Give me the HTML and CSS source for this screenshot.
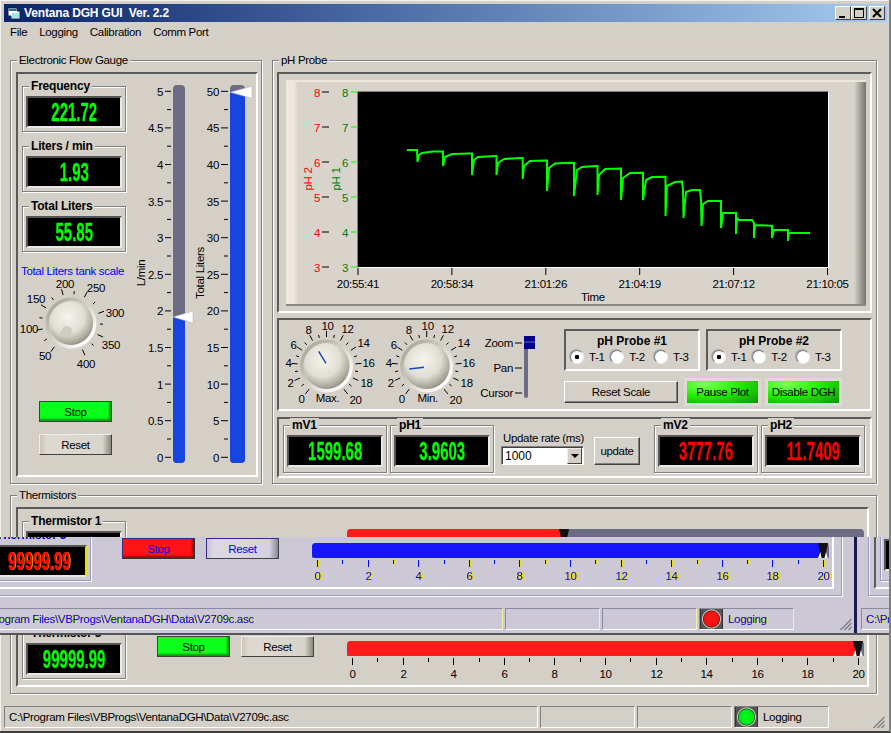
FILE: index.html
```html
<!DOCTYPE html>
<html lang="en">
<head>
    <meta charset="UTF-8">
    <title>Ventana DGH GUI Ver. 2.2</title>
    <link rel="stylesheet" href="styles.css">
</head>
<body>
<div class="window">
    <div class="titlebar">
        <svg class="app-icon" width="16" height="16" viewBox="0 0 16 16">
            <path d="M2 3h9v3h3v8H5v-3H2z" fill="#fff" stroke="#123" stroke-width="1"/>
            <rect x="3" y="4" width="7" height="2" fill="#2a6a9a"/>
            <rect x="6" y="8" width="7" height="5" fill="#9fe6f0"/>
        </svg>
        <span class="title-text">Ventana DGH GUI  Ver. 2.2</span>
        <div class="win-buttons">
            <button class="win-btn"><svg width="10" height="10"><rect x="1" y="8" width="6" height="2" fill="#000"/></svg></button>
            <button class="win-btn"><svg width="10" height="10"><rect x="0.5" y="0.5" width="9" height="9" fill="none" stroke="#000"/><rect x="0" y="0" width="10" height="2" fill="#000"/></svg></button>
            <button class="win-btn close"><svg width="10" height="10"><path d="M1 1l8 8M9 1l-8 8" stroke="#000" stroke-width="2"/></svg></button>
        </div>
    </div>
    <div class="menubar">
        <span>File</span>
        <span>Logging</span>
        <span>Calibration</span>
        <span>Comm Port</span>
    </div>

    <div class="client">
        <div class="top-row">
            <div class="group flow-group">
                <span class="group-title">Electronic Flow Gauge</span>
                <div class="sunken flow-panel">
                    <div class="flow-left">
                        <div class="readout">
                            <strong class="group-title">Frequency</strong>
                            <div class="lcd"><span>221.72</span></div>
                        </div>
                        <div class="readout">
                            <strong class="group-title">Liters / min</strong>
                            <div class="lcd"><span>1.93</span></div>
                        </div>
                        <div class="readout">
                            <strong class="group-title">Total Liters</strong>
                            <div class="lcd"><span>55.85</span></div>
                        </div>
                        <div class="tank-label">Total Liters tank scale</div>
                        <svg id="tank-knob" width="104" height="98" viewBox="22 278 104 98"></svg>
                        <button class="btn btn-stop flow-stop">Stop</button>
                        <button class="btn btn-reset flow-reset">Reset</button>
                    </div>
                    <svg id="gauges" width="128" height="401" viewBox="128 74 128 401"></svg>
                </div>
            </div>

            <div class="group ph-group">
                <span class="group-title">pH Probe</span>
                <div class="sunken plot-panel">
                    <div class="plot-frame">
                        <svg id="plot" width="580" height="222" viewBox="286 82 580 222"></svg>
                    </div>
                </div>
                <div class="sunken control-panel">
                    <svg id="knobs" width="201" height="89" viewBox="279 320 201 89"></svg>
                    <svg id="mode-slider" width="60" height="89" viewBox="480 320 60 89"></svg>
                    <div class="probe-col">
                        <div class="probe-row">
                            <div class="probe-box">
                                <strong>pH Probe #1</strong>
                                <div class="radios">
                                    <label class="radio on">T-1</label>
                                    <label class="radio">T-2</label>
                                    <label class="radio">T-3</label>
                                </div>
                            </div>
                            <div class="probe-box">
                                <strong>pH Probe #2</strong>
                                <div class="radios">
                                    <label class="radio on">T-1</label>
                                    <label class="radio">T-2</label>
                                    <label class="radio">T-3</label>
                                </div>
                            </div>
                        </div>
                        <div class="action-row">
                            <button class="btn btn-flat reset-scale">Reset Scale</button>
                            <button class="btn-glow">Pause Plot</button>
                            <button class="btn-glow">Disable DGH</button>
                        </div>
                    </div>
                </div>
                <div class="sunken values-panel">
                    <div class="readout tall">
                        <strong class="group-title">mV1</strong>
                        <div class="lcd"><span>1599.68</span></div>
                    </div>
                    <div class="readout tall">
                        <strong class="group-title">pH1</strong>
                        <div class="lcd"><span>3.9603</span></div>
                    </div>
                    <div class="rate-col">
                        <span>Update rate (ms)</span>
                        <div class="combo">
                            <span class="combo-value">1000</span>
                            <span class="combo-arrow"></span>
                        </div>
                    </div>
                    <button class="btn btn-flat update-btn">update</button>
                    <div class="readout tall mv2">
                        <strong class="group-title">mV2</strong>
                        <div class="lcd red"><span>3777.76</span></div>
                    </div>
                    <div class="readout tall">
                        <strong class="group-title">pH2</strong>
                        <div class="lcd red"><span>11.7409</span></div>
                    </div>
                </div>
            </div>
        </div>

        <div class="group thermistors">
            <span class="group-title">Thermistors</span>
            <div class="sunken thermistor-panel">
                <div class="thermistor-row">
                    <div class="readout">
                        <strong class="group-title">Thermistor 1</strong>
                        <div class="lcd"><span>99999.99</span></div>
                    </div>
                    <button class="btn btn-stop not-painted">Stop</button>
                    <button class="btn btn-reset not-painted">Reset</button>
                    <svg class="bar-scale" data-value="8.38" data-fill="#ff1a1a" width="520" height="46" viewBox="0 0 520 46"></svg>
                </div>
                <div class="thermistor-row">
                    <div class="readout">
                        <strong class="group-title">Thermistor 2</strong>
                        <div class="lcd"><span>99999.99</span></div>
                    </div>
                    <button class="btn btn-stop">Stop</button>
                    <button class="btn btn-reset">Reset</button>
                    <svg class="bar-scale" data-value="20" data-fill="#ff1a1a" width="520" height="46" viewBox="0 0 520 46"></svg>
                </div>
                <div class="thermistor-row">
                    <div class="readout">
                        <strong class="group-title">Thermistor 3</strong>
                        <div class="lcd"><span>99999.99</span></div>
                    </div>
                    <button class="btn btn-stop">Stop</button>
                    <button class="btn btn-reset">Reset</button>
                    <svg class="bar-scale" data-value="20" data-fill="#ff1a1a" width="520" height="46" viewBox="0 0 520 46"></svg>
                </div>
            </div>
        </div>
    </div>

    <div class="statusbar">
        <div class="status-cell path-cell">C:\Program Files\VBProgs\VentanaDGH\Data\V2709c.asc</div>
        <div class="status-cell mid-cell"></div>
        <div class="status-cell mid-cell"></div>
        <div class="status-cell log-cell"><span class="led green"></span>Logging</div>
        <svg class="grip" width="12" height="12" viewBox="0 0 12 12"><path d="M11.5 1l-11 11M11.5 5l-7 7M11.5 9l-3 3" stroke="#808080" stroke-width="1.4"/></svg>
    </div>

    <!-- stale copy of the window left on screen by the last redraw -->
    <div class="ghost">
        <div class="ghost-main">
            <div class="ghost-shift">
                <div class="group thermistors">
                    <div class="sunken thermistor-panel">
                        <div class="thermistor-row">
                            <div class="readout">
                                <strong class="group-title">Thermistor 3</strong>
                                <div class="lcd red"><span>99999.99</span></div>
                            </div>
                            <button class="btn btn-alarm">Stop</button>
                            <button class="btn btn-reset">Reset</button>
                            <svg class="bar-scale" data-value="20" data-fill="#1414ff" width="520" height="46" viewBox="0 0 520 46"></svg>
                        </div>
                    </div>
                </div>
                <div class="statusbar">
                    <div class="status-cell path-cell">C:\Program Files\VBProgs\VentanaDGH\Data\V2709c.asc</div>
                    <div class="status-cell mid-cell"></div>
                    <div class="status-cell mid-cell"></div>
                    <div class="status-cell log-cell"><span class="led red"></span>Logging</div>
                    <svg class="grip" width="12" height="12" viewBox="0 0 12 12"><path d="M11.5 1l-11 11M11.5 5l-7 7M11.5 9l-3 3" stroke="#808080" stroke-width="1.4"/></svg>
                </div>
            </div>
        </div>
        <div class="ghost-wrap">
            <div class="group thermistors">
                <div class="sunken thermistor-panel">
                    <div class="thermistor-row">
                        <div class="readout">
                            <div class="lcd"></div>
                        </div>
                    </div>
                </div>
            </div>
            <div class="statusbar">
                <div class="status-cell path-cell">C:\Program Files\VBProgs\VentanaDGH\Data\V2709c.asc</div>
            </div>
        </div>
    </div>
</div>
<script src="script.js"></script>
</body>
</html>
```

FILE: styles.css
```css
* {
    box-sizing: border-box;
}

body {
    margin: 0;
    overflow: hidden;
    font-family: "Liberation Sans", Arial, sans-serif;
    font-size: 11.5px;
    letter-spacing: -0.33px;
    color: #000;
    background-color: #d4d0c8;
}

button {
    font-family: inherit;
    font-size: inherit;
    letter-spacing: inherit;
    color: inherit;
    padding: 0;
}

svg {
    display: block;
    flex: none;
    overflow: visible;
}

svg text {
    font-family: "Liberation Sans", Arial, sans-serif;
    font-size: 11.5px;
    letter-spacing: -0.3px;
}

.window {
    position: relative;
    width: 891px;
    height: 733px;
    padding: 4px 4px 0 4px;
    background-color: #d4d0c8;
    border-right: 2px solid #808080;
    border-bottom: 2px solid #404040;
    box-shadow: inset 1px 1px 0 #f4f2ec;
    overflow: hidden;
}

.titlebar {
    display: flex;
    align-items: center;
    height: 18px;
    margin-right: -2px;
    padding: 0 2px;
    color: #fff;
    background: linear-gradient(90deg, #0a246a, #a6caf0);
}

.app-icon {
    margin-right: 2px;
}

.title-text {
    font-size: 12px;
    font-weight: bold;
    letter-spacing: -0.15px;
    white-space: pre;
}

.win-buttons {
    display: flex;
    margin-left: auto;
}

.win-btn {
    display: flex;
    align-items: center;
    justify-content: center;
    width: 16px;
    height: 14px;
    background-color: #d4d0c8;
    border: 1px solid;
    border-color: #fff #404040 #404040 #fff;
}

.win-btn.close {
    margin-left: 2px;
}

.menubar {
    display: flex;
    gap: 12px;
    align-items: center;
    height: 20px;
    padding-left: 6px;
}

.client {
    padding: 18px 6px 0;
}

.top-row {
    display: flex;
    gap: 10px;
    height: 424px;
}

/* etched frame with its caption sitting on the top line */
.group {
    border: 1px solid #808080;
    box-shadow: 1px 1px 0 #fff, inset 1px 1px 0 #fff;
}

.group-title {
    display: table;
    height: 14px;
    margin: -8px 0 0 6px;
    padding: 0 2px;
    line-height: 14px;
    background-color: #d4d0c8;
}

.sunken {
    border: 2px solid;
    border-color: #5a5a5a #fff #fff #5a5a5a;
}

.flow-group {
    width: 252px;
}

.ph-group {
    width: 605px;
}

.flow-panel {
    display: flex;
    width: 242px;
    height: 405px;
    margin: 5px 0 0 5px;
}

.flow-left {
    display: flex;
    flex-direction: column;
    width: 104px;
    margin: 12px 2px 0 4px;
}

.readout {
    flex: none;
    width: 104px;
    height: 46px;
    margin-bottom: 14px;
    border: 1px solid #808080;
    box-shadow: 1px 1px 0 #fff, inset 1px 1px 0 #fff;
}

.readout .group-title {
    font-size: 12px;
    letter-spacing: -0.2px;
}

.readout.tall {
    height: 48px;
    margin-bottom: 0;
}

.lcd {
    display: flex;
    align-items: center;
    justify-content: center;
    width: 96px;
    height: 32px;
    margin: 3px 0 0 3px;
    overflow: hidden;
    color: #00ff00;
    background-color: #000;
    border: 2px solid;
    border-color: #555 #e8e8e8 #e8e8e8 #555;
}

.lcd span {
    display: inline-block;
    font-size: 25px;
    font-weight: bold;
    letter-spacing: 0;
    line-height: 1;
    transform: scaleX(0.6);
    -webkit-text-stroke: 0.3px currentColor;
}

.lcd.red {
    color: #ff0000;
}

.tank-label {
    margin: -2px 0 0 -1px;
    height: 14px;
    line-height: 14px;
    color: #0000ff;
    white-space: nowrap;
}

.btn {
    flex: none;
    width: 73px;
    height: 21px;
    background-color: #d4d0c8;
    border: 1px solid #404040;
}

.btn-stop {
    background-color: #0bff1a;
    box-shadow: inset -3px -3px 2px -1px #0a9a10;
}

.btn-reset {
    border-color: #eee #404040 #404040 #eee;
    background: linear-gradient(90deg, #c8c4ba, #dedad2 10%, #d8d4cc 88%, #8a887e);
}

.btn-alarm {
    background-color: #ff1414;
    border-color: #3a2a8a #333 #333 #3a2a8a;
    box-shadow: inset -3px -3px 2px -1px #9a0a0a;
}

.btn-flat {
    border-color: #fff #404040 #404040 #fff;
    box-shadow: inset -1px -1px 0 #808080;
}

.flow-stop {
    margin-top: 25px;
    margin-left: 17px;
}

.flow-reset {
    margin-top: 12px;
    margin-left: 17px;
}

.plot-panel {
    width: 595px;
    height: 241px;
    margin: 5px 0 0 4px;
    padding: 6px 0 5px 7px;
}

.plot-frame {
    width: 580px;
    height: 226px;
    border-top: 2px solid #ebe7dd;
    border-bottom: 2px solid #8c8a80;
    background: linear-gradient(90deg, #eee9df 0, #eee9df 8px, #d8d4cc 12px, #d8d4cc calc(100% - 12px), #75736c 100%);
}

.control-panel {
    display: flex;
    width: 595px;
    height: 93px;
    margin: 5px 0 0 4px;
}

.probe-col {
    margin: 9px 0 0 24px;
}

.probe-row {
    display: flex;
    gap: 6px;
}

.probe-box {
    width: 136px;
    height: 42px;
    padding-top: 3px;
    text-align: center;
    border: 2px solid;
    border-color: #5a5a5a #fff #fff #5a5a5a;
}

.probe-box strong {
    font-size: 12px;
    letter-spacing: 0;
}

.radios {
    display: flex;
    margin: 2px 0 0 4px;
    text-align: left;
}

.radio {
    display: flex;
    align-items: center;
    gap: 5px;
    width: 46px;
}

.radio:first-child {
    width: 42px;
}

.radio::before {
    content: "";
    width: 12px;
    height: 12px;
    border-radius: 50%;
    background-color: #fff;
    border: 1px solid;
    border-color: #808080 #eee #eee #808080;
    box-shadow: -1px -1px 0 #aaa;
}

.radio.on::before {
    background: radial-gradient(circle, #000 0, #000 2px, #fff 2.5px);
}

.action-row {
    display: flex;
    align-items: center;
    height: 28px;
    margin-top: 7px;
}

.reset-scale {
    width: 114px;
    height: 22px;
}

.btn-glow {
    width: 77px;
    height: 28px;
    margin-left: 6px;
    background: radial-gradient(ellipse at 25% 15%, #7dff5a, #22f000 45%, #0a8a0a 105%);
    background-clip: padding-box;
    border: 3px solid #dedad2;
}

.btn-glow + .btn-glow {
    margin-left: 4px;
}

.values-panel {
    display: flex;
    gap: 3px;
    width: 595px;
    height: 61px;
    margin: 6px 0 0 4px;
    padding: 6px 0 0 4px;
}

.rate-col {
    width: 84px;
    margin: 7px 0 0 4px;
    white-space: nowrap;
    padding-left: 2px;
}

.combo {
    display: flex;
    align-items: center;
    width: 83px;
    height: 19px;
    margin: 2px 0 0 -2px;
    padding-right: 1px;
    background-color: #fff;
    border: 1px solid;
    border-color: #808080 #fff #fff #808080;
    box-shadow: inset 1px 1px 0 #404040;
}

.combo-value {
    flex: 1;
    padding-left: 3px;
    font-size: 12px;
    letter-spacing: 0;
}

.combo-arrow {
    position: relative;
    width: 15px;
    height: 16px;
    background-color: #d4d0c8;
    border: 1px solid;
    border-color: #eee #404040 #404040 #eee;
}

.combo-arrow::after {
    content: "";
    position: absolute;
    left: 3px;
    top: 5px;
    border: 4px solid transparent;
    border-top: 4px solid #000;
    border-bottom: 0;
}

.update-btn {
    width: 46px;
    height: 28px;
    margin: 12px 0 0 6px;
}

.mv2 {
    margin-left: 11px;
}

.thermistors {
    width: 867px;
    height: 199px;
    margin-top: 11px;
}

.thermistor-panel {
    width: 853px;
    height: 180px;
    margin: 5px 0 0 5px;
    padding: 12px 0 0 4px;
}

.thermistor-row {
    display: flex;
    gap: 11px;
    height: 46px;
    margin-bottom: 10px;
}

.thermistor-row .btn {
    margin-top: 3px;
}

.thermistor-row .btn-stop,
.thermistor-row .btn-alarm {
    margin-left: 20px;
}

.not-painted {
    visibility: hidden;
}

.bar-scale {
    margin-left: 22px;
}

.statusbar {
    display: flex;
    height: 22px;
    margin-top: 12px;
}

.status-cell {
    display: flex;
    align-items: center;
    flex: none;
    height: 22px;
    padding-left: 4px;
    border: 1px solid;
    border-color: #808080 #fff #fff #808080;
    white-space: nowrap;
    overflow: hidden;
}

.path-cell {
    width: 534px;
    margin-right: 2px;
}

.mid-cell {
    width: 95px;
    margin-right: 2px;
}

.log-cell {
    width: 95px;
    padding-left: 0;
    gap: 5px;
}

.led {
    width: 23px;
    height: 22px;
    background: radial-gradient(circle closest-side, #00ff1a 0, #00e81a 72%, #0a6a1a 80%, #c8c8c0 90%, #555 100%);
    background-color: #555;
    border: 1px solid #333;
}

.led.red {
    background: radial-gradient(circle closest-side, #ff1414 0, #ee1414 72%, #7a1414 80%, #c8c8c0 90%, #555 100%);
}

.grip {
    align-self: flex-end;
    margin-left: auto;
}

/* leftover image of the window, drawn over the live controls */
.ghost {
    position: absolute;
    left: 0;
    top: 537px;
    display: flex;
    width: 891px;
    height: 98px;
    color: #0000ff;
    text-shadow: 1px 0 0 #e8e000;
    background-color: #cdc8d6;
    border-bottom: 2px solid #555;
    overflow: hidden;
}

.ghost .group,
.ghost .readout {
    border-color: #9a98c0;
    box-shadow: 1px 1px 0 #fff, inset 1px 1px 0 #f4f2f8;
}

.ghost .sunken {
    border-color: #5a5a5a #fff #fff #5a5a5a;
}

.ghost .group-title {
    background-color: #cdc8d6;
}

.ghost .status-cell {
    border-color: #8a8aa0 #f4f0a8 #fff #8a8aa0;
}

.ghost .btn-reset {
    border-color: #3a2a8a #404040 #404040 #3a2a8a;
    background: linear-gradient(90deg, #c8c4d0, #dcd8e4 10%, #d4d0e0 88%, #8a8898);
}

.ghost .lcd {
    border-right-color: #e8e000;
}

.ghost .bar-scale g {
    filter: drop-shadow(1px 0 0 #e8e000);
}

.ghost .bar-scale text {
    fill: #0000ff;
}

.ghost .bar-scale line {
    stroke: #0000ff;
}

.ghost-main {
    flex: none;
    width: 857px;
    height: 96px;
    overflow: hidden;
    border-right: 3px solid #1a1a50;
}

.ghost-shift {
    width: 891px;
    margin-left: -35px;
    padding: 0 4px;
}

.ghost-shift .thermistors {
    margin: -140px 0 0 6px;
}

.ghost-shift .thermistor-panel {
    margin-top: 11px;
    padding-top: 124px;
}

.ghost-wrap {
    flex: none;
    width: 34px;
    height: 96px;
    border-left: 1px solid #e8e000;
    overflow: hidden;
}

.ghost-wrap .thermistors {
    margin: -140px 0 0 10px;
}

.ghost-wrap .thermistor-panel {
    margin-top: 11px;
    padding-top: 124px;
}

.ghost-wrap .statusbar {
    padding-left: 3px;
}
```

FILE: script.js
```js
// scales, knobs and the plot are all drawn here, in page coordinates via each viewBox

function line(x1, y1, x2, y2, color, width) {
    return `<line x1="${x1}" y1="${y1}" x2="${x2}" y2="${y2}" stroke="${color}" stroke-width="${width || 1}"/>`;
}

function text(x, y, str, color, anchor) {
    return `<text x="${x}" y="${y}" fill="${color || '#000'}" text-anchor="${anchor || 'middle'}">${str}</text>`;
}

function vtext(x, y, str, color) {
    return `<text transform="translate(${x} ${y}) rotate(-90)" fill="${color}" text-anchor="middle">${str}</text>`;
}

// vertical tank gauges
function drawGauge(x, w, max, labelX, value) {
    let s = '';
    const y0 = 457.3, y1 = 91.3;
    const total = 20;
    for (let i = 0; i <= total; i++) {
        const y = y0 - (y0 - y1) * i / total;
        if (i % 2 === 0) {
            s += line(labelX + 2, y, x - 2, y, '#000');
            s += text(labelX, y + 4.5, max * i / total, '#000', 'end');
        } else {
            s += line(x - 6, y, x - 2, y, '#000');
        }
    }
    const vy = y0 - (y0 - y1) * value / max;
    s += `<rect x="${x}" y="85" width="${w}" height="378" rx="4" fill="#6c6c85"/>`;
    s += `<path d="M${x} ${vy}H${x + w}V459q0 4 -4 4H${x + 4}q-4 0 -4 -4z" fill="#1745e0"/>`;
    const base = x + w + (w > 13 ? 7 : 8);
    s += `<path d="M${x} ${vy + 1}L${base} ${vy - 5}V${vy + 7}z" fill="#fff" stroke="#aaa" stroke-width="0.5"/>`;
    return s;
}

document.getElementById('gauges').innerHTML =
    drawGauge(173, 12, 5, 163, 1.93) +
    drawGauge(230, 15, 50, 219, 50) +
    vtext(145, 273, 'L/min', '#000') +
    vtext(204, 273, 'Total Liters', '#000');

// round knobs
function knobBody(id, cx, cy, r) {
    return `<defs>
        <radialGradient id="${id}" cx="0.42" cy="0.36" r="0.7">
            <stop offset="0" stop-color="#f6f4ee"/>
            <stop offset="0.55" stop-color="#e0ddd3"/>
            <stop offset="0.85" stop-color="#aaa699"/>
            <stop offset="1" stop-color="#7e7a6e"/>
        </radialGradient>
        <linearGradient id="${id}h" x1="0.1" y1="0.1" x2="0.85" y2="0.85">
            <stop offset="0" stop-color="#a8a498"/>
            <stop offset="0.5" stop-color="#d4d0c8"/>
            <stop offset="1" stop-color="#fff"/>
        </linearGradient>
    </defs>
    <circle cx="${cx}" cy="${cy}" r="${r + 3.5}" fill="url(#${id}h)"/>
    <circle cx="${cx}" cy="${cy}" r="${r}" fill="url(#${id})"/>`;
}

function knobTicks(cx, cy, start, step, count) {
    let s = '';
    for (let i = 0; i < count; i++) {
        const a = (start + step * i) * Math.PI / 180;
        const len = i % 2 === 0 ? 35 : 32;
        s += line(cx + Math.sin(a) * 29, cy - Math.cos(a) * 29,
                  cx + Math.sin(a) * len, cy - Math.cos(a) * len, '#000');
    }
    return s;
}

const TANK_LABELS = [[45, 360, 50], [29, 333, 100], [36, 303, 150], [65, 288, 200], [96, 292, 250], [115, 317, 300], [111, 349, 350], [86, 368, 400]];
let tank = knobTicks(71, 323, -145, 21.55, 15);
TANK_LABELS.forEach(l => { tank += text(l[0], l[1], l[2]); });
tank += knobBody('k0', 71, 323, 22);
tank += '<circle cx="66" cy="331" r="6" fill="#cfccc2"/><path d="M60.5 331a6 6 0 0 1 10 -4" fill="none" stroke="#f4f2ec"/>';
document.getElementById('tank-knob').innerHTML = tank;

const SCALE_OFFSETS = [[-25, 37], [-36, 21], [-38, 1], [-33, -17], [-18, -32], [1, -36], [21, -33], [37, -19], [42, 1], [40, 21], [29, 38]];
function rangeKnob(id, cx, cy, name, px1, py1, px2, py2) {
    let s = knobTicks(cx, cy, -143, 14.3, 21);
    SCALE_OFFSETS.forEach((o, i) => { s += text(cx + o[0], cy + o[1], i * 2); });
    s += knobBody(id, cx, cy, 23);
    s += text(cx + 1, 402, name);
    s += line(px1, py1, px2, py2, '#1745c8', 1.5);
    return s;
}
document.getElementById('knobs').innerHTML =
    rangeKnob('k1', 326.5, 366, 'Max.', 318.7, 351.3, 326, 363.3) +
    rangeKnob('k2', 426.7, 366, 'Min.', 409.3, 369, 424, 367.3);

// zoom / pan / cursor selector
let mode = '';
[['Zoom', 343], ['Pan', 368], ['Cursor', 393]].forEach(m => {
    mode += text(513, m[1] + 4, m[0], '#000', 'end');
    mode += line(515, m[1], 522, m[1], '#000');
});
mode += '<rect x="524" y="340" width="4" height="58" rx="2" fill="#6c6c85"/>';
mode += '<rect x="524" y="336" width="11" height="13" fill="#00008b"/>';
mode += line(524, 342, 535, 342, '#6a6ad0');
document.getElementById('mode-slider').innerHTML = mode;

// pH plot
const TRACE = [
    [407,150],[417,150],[417.5,162],[419,155],[422,153],[433,151.5],[443,151.5],[443,166],[445,157],[452,154],
    [470,153.5],[472,153.5],[472,175],[474,160],[478,157],[495,156],[496.5,156],[496.5,175],[498,163],[504,159],
    [520,158],[522.7,158],[522.7,179],[524,166],[530,161],[546,160.5],[547,160.5],[547,191],[549,168],[555,163.5],
    [570,162.7],[574,163],[574,196],[577,170],[582,167],[596,166],[597.5,166],[597.5,195],[599,175],[605,169],
    [621,168.5],[621,200],[623,178],[630,173],[642,172.7],[643,172.7],[643,200],[646,180],[652,177],[665,176.7],
    [665.5,176.7],[665.5,216],[667,186],[675,182],[682,181.5],[683,190],[683.5,218],[686,192],[692,190],[700,190],
    [701,200],[701.5,226],[703,204],[708,201],[720,201],[721,201],[721,228],[723,213],[735,213],[736,213],
    [736,234],[737,218],[739,220],[752,220],[754,223],[754,238],[755,225],[771,225.7],[772,225.7],[772,238],
    [774,230],[787,230],[788,230],[788,241],[789,233],[810,233]
];

let plot = '<rect x="357.5" y="91.5" width="471" height="176" fill="#000"/>';
plot += line(357.5, 91.5, 828.5, 91.5, '#808080') + line(357.5, 91.5, 357.5, 267.5, '#808080');
plot += line(828.5, 91.5, 828.5, 267.5, '#fff') + line(357.5, 267.5, 828.5, 267.5, '#fff');
[8, 7, 6, 5, 4, 3].forEach((v, i) => {
    const y = 92 + i * 35;
    plot += line(322, y, 329, y, '#000') + text(317, y + 4.5, v, '#ff0000');
    plot += line(351, y, 358, y, '#00ff00') + text(345, y + 4.5, v, '#008000');
});
plot += vtext(312, 179, 'pH 2', '#ff0000') + vtext(340, 179, 'pH 1', '#008000');
['20:55:41', '20:58:34', '21:01:26', '21:04:19', '21:07:12', '21:10:05'].forEach((t, i) => {
    const x = 358 + i * 93.9;
    plot += line(x, 268, x, 275, '#000') + text(x, 288, t);
});
plot += text(593, 301, 'Time');
plot += `<polyline points="${TRACE.join(' ')}" fill="none" stroke="#00ff00" stroke-width="2"/>`;
document.getElementById('plot').innerHTML = plot;

// thermistor bars
document.querySelectorAll('.bar-scale').forEach(svg => {
    const value = +svg.dataset.value, fill = svg.dataset.fill;
    const x = v => 5 + v * 25.3;
    const px = x(value);
    let s = '<path d="M0 12q0 -4 4 -4H513q4 0 4 4v11H0z" fill="#6c6c85"/>';
    s += `<path d="M${px} 8H4q-4 0 -4 4v7q0 4 4 4H${px}z" fill="${fill}"/>`;
    s += `<path d="M${px - 5} 8H${px + 5}L${px + 2} 23H${px - 1.5}z" fill="#111"/>`;
    s += `<path d="M${px - 5} 23L${px - 2.5} 17L${px - 1.5} 23zM${px + 1.5} 23L${px + 3} 17L${px + 4.5} 23z" fill="#fff"/>`;
    s += '<g>';
    for (let i = 0; i <= 20; i++) {
        const tx = Math.round(x(i)) + 0.5;
        s += line(tx, 25, tx, i % 2 ? 29 : 32, '#000');
        if (i % 2 === 0) s += text(tx, 45, i);
    }
    s += '</g>';
    svg.innerHTML = s;
});
```
